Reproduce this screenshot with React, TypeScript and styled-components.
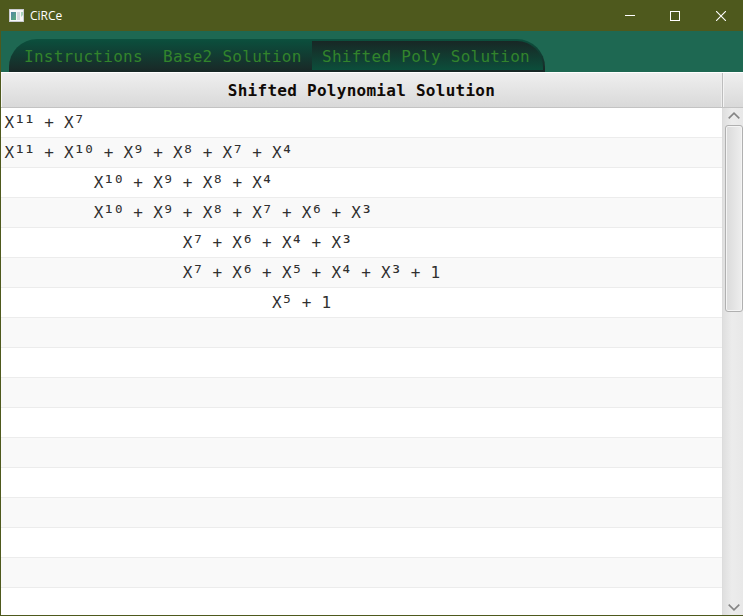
import React from 'react';
import styled, { createGlobalStyle, css } from 'styled-components';

const GlobalStyle = createGlobalStyle`
  * { box-sizing: border-box; }
  body { margin: 0; overflow: hidden; background: #fff; }
`;

const monoText = css`
  font-family: "DejaVu Sans Mono", monospace;
  font-size: 16px;
  letter-spacing: 0.27px;
  white-space: pre;
`;

const Window = styled.div`
  width: 743px;
  height: 616px;
  display: flex;
  flex-direction: column;
  background: #4e591d;
  padding: 0 0 1px 1px;
`;

const TitleBar = styled.header`
  height: 31px;
  flex: none;
  display: flex;
  align-items: center;
  padding-left: 8px;
`;

const Title = styled.span`
  flex: 1;
  margin-left: 6px;
  color: #fff;
  font: 12px/16px "Open Sans", "Noto Sans", sans-serif;
`;

const WindowButton = styled.button`
  width: 45.5px;
  height: 31px;
  padding: 0 0 0 1px;
  border: 0;
  background: none;
  display: flex;
  align-items: center;
  justify-content: center;
`;

const TabHeader = styled.nav`
  height: 41px;
  flex: none;
  display: flex;
  padding: 8px 0 0 8px;
  background: #1e6852;
`;

const TabStrip = styled.div`
  width: 536px;
  height: 33px;
  display: flex;
  border-radius: 28px 28px 0 0;
  overflow: hidden;
  background: linear-gradient(#0c513e 0, #0c4c3b 10%, #182c29 88%, #172725 100%);
`;

const Tab = styled.button<{ $width: number; $selected?: boolean }>`
  ${monoText}
  width: ${(p) => p.$width}px;
  height: ${(p) => (p.$selected ? 29 : 33)}px;
  margin-top: ${(p) => (p.$selected ? 2 : 0)}px;
  padding: 3px 0 0 10px;
  border: 0;
  text-align: left;
  color: #32842c;
  line-height: ${(p) => (p.$selected ? 26 : 30)}px;
  background: ${(p) => (p.$selected ? 'linear-gradient(#182725, #0c4e3b)' : 'none')};
  border-top-right-radius: ${(p) => (p.$selected ? '26px' : 0)};
  &:first-child { padding-left: 15px; }
`;

const ColumnHeader = styled.div`
  height: 36px;
  flex: none;
  display: flex;
  border-top: 1px solid #fff;
  border-bottom: 1px solid #c3c3c3;
  background: linear-gradient(#efefef, #d9d9d9);
`;

const HeaderCell = styled.div`
  ${monoText}
  width: 722px;
  border-right: 1px solid #bdbdbd;
  box-shadow: inset -1px 0 #ededed, inset 1px 0 #f5f5f5;
  text-align: center;
  color: #100a06;
  font-weight: bold;
  line-height: 35px;
`;

const HeaderCorner = styled.div`
  flex: 1;
  box-shadow: inset 1px 0 #f4f4f4;
`;

const TableBody = styled.main`
  flex: 1;
  min-height: 0;
  display: flex;
`;

const Rows = styled.div`
  width: 721px;
  overflow: hidden;
  background: #fff;
`;

const Row = styled.div`
  ${monoText}
  height: 30px;
  padding-left: 3.6px;
  border-bottom: 1px solid #ececec;
  color: #303030;
  line-height: 30px;
  background: #fff;
  &:nth-child(even) { background: #f9f9f9; }
`;

/* Enlarged superscript glyphs that keep the column pitch of the row text. */
const Exponent = styled.span`
  font-size: 20px;
  line-height: 0;
  letter-spacing: -2.14px;
  vertical-align: -2px;
  margin-left: -0.8px;
  margin-right: 0.8px;
`;

const Scrollbar = styled.aside`
  flex: 1;
  display: flex;
  flex-direction: column;
  padding-left: 2px;
  border-left: 1px solid #dcdcdc;
  background: linear-gradient(90deg, #dfdfdf, #ececec 45%, #e8e8e8);
`;

const ScrollButton = styled.button<{ $down?: boolean }>`
  height: 17px;
  flex: none;
  padding: ${(p) => (p.$down ? '2px 0 0' : '0 0 2px')};
  border: 0;
  background: none;
  display: flex;
  align-items: center;
  justify-content: center;
  svg { transform: ${(p) => (p.$down ? 'rotate(180deg)' : 'none')}; }
`;

const Track = styled.div`
  flex: 1;
`;

const Thumb = styled.div`
  width: 18px;
  height: 187px;
  border: 1px solid #b0b0b0;
  border-radius: 3px;
  background: linear-gradient(90deg, #dadada, #eeeeee);
  box-shadow: inset 0 0 0 1px #f4f4f4;
`;

const polynomials = [
  'X¹¹ + X⁷',
  'X¹¹ + X¹⁰ + X⁹ + X⁸ + X⁷ + X⁴',
  ' '.repeat(9) + 'X¹⁰ + X⁹ + X⁸ + X⁴',
  ' '.repeat(9) + 'X¹⁰ + X⁹ + X⁸ + X⁷ + X⁶ + X³',
  ' '.repeat(18) + 'X⁷ + X⁶ + X⁴ + X³',
  ' '.repeat(18) + 'X⁷ + X⁶ + X⁵ + X⁴ + X³ + 1',
  ' '.repeat(27) + 'X⁵ + 1',
];

const rows = Array.from({ length: 17 }, (_, i) => polynomials[i] ?? '');

const Polynomial = ({ text }: { text: string }) => (
  <>
    {text.split(/([⁰¹²³⁴-⁹]+)/).map((part, i) =>
      i % 2 ? <Exponent key={i}>{part}</Exponent> : part,
    )}
  </>
);

const AppIcon = () => (
  <svg width="15" height="13" viewBox="0 0 15 13">
    <defs>
      <linearGradient id="pane" x1="0" y1="0" x2="1" y2="1">
        <stop stopColor="#5285a5" />
        <stop offset="1" stopColor="#5bad79" />
      </linearGradient>
    </defs>
    <rect width="15" height="13" fill="#c9cbd0" />
    <rect x="1" y="1" width="13" height="11" fill="#f7f7f7" />
    <rect x="2" y="3" width="5" height="8" fill="url(#pane)" />
    <rect x="8" y="3" width="3" height="8" fill="#d5dade" />
    <path d="M12 3h2v3l-2 2z" fill="#a9d4bd" />
  </svg>
);

const Chevron = () => (
  <svg width="12" height="7" viewBox="0 0 12 7">
    <path d="M.7 6.3L6 1.2L11.3 6.3" fill="none" stroke="#858585" strokeWidth="1.6" />
  </svg>
);

export default function App() {
  return (
    <>
      <GlobalStyle />
      <Window>
        <TitleBar>
          <AppIcon />
          <Title>CiRCe</Title>
          <WindowButton aria-label="Minimize">
            <svg width="10" height="10"><path d="M0 4.5h10" stroke="#fff" /></svg>
          </WindowButton>
          <WindowButton aria-label="Maximize">
            <svg width="10" height="10"><rect x=".5" y=".5" width="9" height="9" fill="none" stroke="#fff" /></svg>
          </WindowButton>
          <WindowButton aria-label="Close">
            <svg width="10" height="10"><path d="M0 0L10 10M10 0L0 10" stroke="#fff" strokeWidth="1.1" /></svg>
          </WindowButton>
        </TitleBar>
        <TabHeader>
          <TabStrip>
            <Tab $width={144}>Instructions</Tab>
            <Tab $width={159}>Base2 Solution</Tab>
            <Tab $width={231} $selected>Shifted Poly Solution</Tab>
          </TabStrip>
        </TabHeader>
        <ColumnHeader>
          <HeaderCell>Shifted Polynomial Solution</HeaderCell>
          <HeaderCorner />
        </ColumnHeader>
        <TableBody>
          <Rows>
            {rows.map((text, i) => <Row key={i}><Polynomial text={text} /></Row>)}
          </Rows>
          <Scrollbar>
            <ScrollButton aria-label="Scroll up"><Chevron /></ScrollButton>
            <Track><Thumb /></Track>
            <ScrollButton $down aria-label="Scroll down"><Chevron /></ScrollButton>
          </Scrollbar>
        </TableBody>
      </Window>
    </>
  );
}
